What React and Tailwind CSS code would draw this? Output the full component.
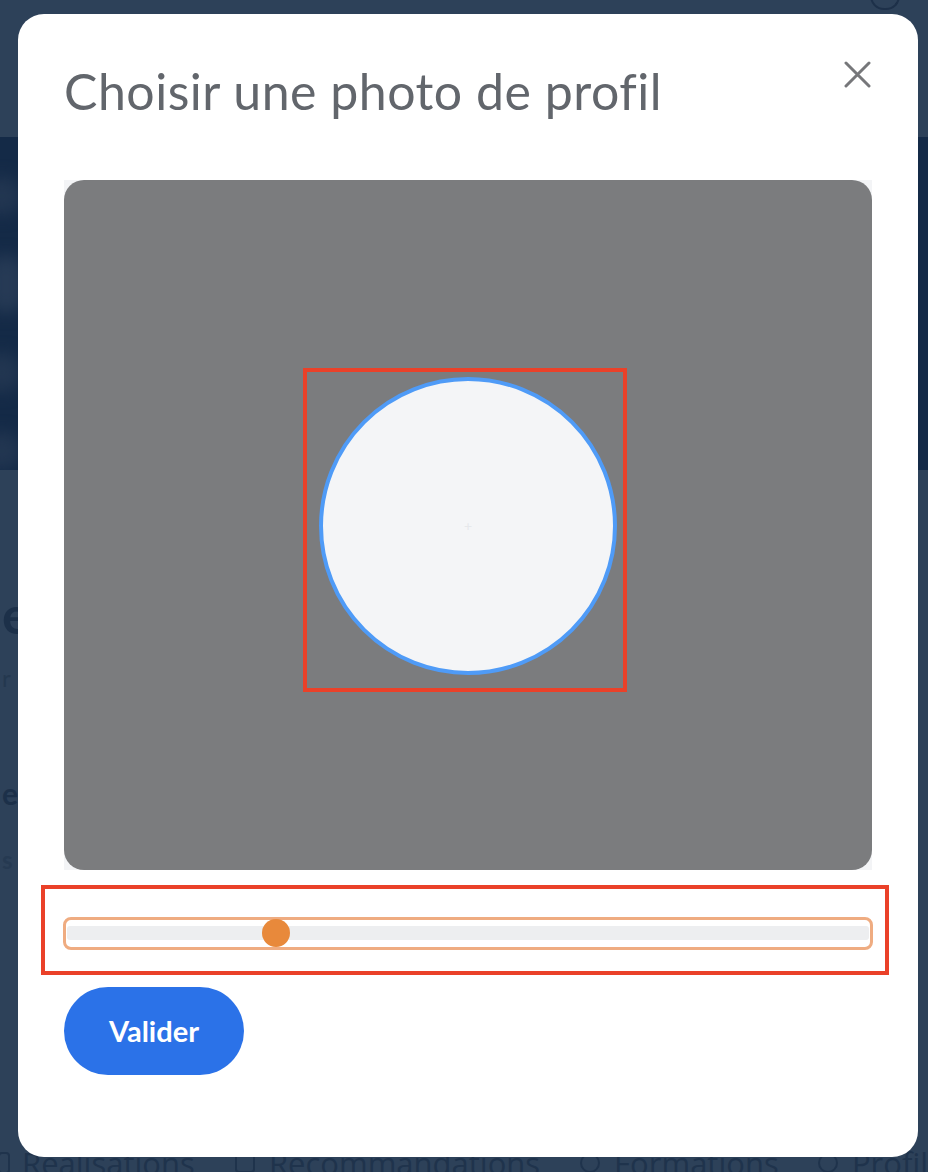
import React from 'react'

function CloseIcon() {
  return (
    <svg width="27" height="27" viewBox="0 0 27 27" fill="none">
      <path d="M2 2L25 25M25 2L2 25" stroke="#76777a" strokeWidth="3" strokeLinecap="round" />
    </svg>
  )
}

function BackgroundPage() {
  return (
    <div className="w-full h-[1172px] bg-[#2d4159] flex flex-col overflow-hidden" style={{ fontFamily: 'Lato, "Noto Sans", sans-serif' }}>
      {/* header */}
      <div className="h-[137px] bg-[#2d4159] flex justify-end pr-[28px]">
        <div className="w-[30px] h-[14px] -mt-[4px] rounded-b-full border-2 border-[#1d3049]" />
      </div>
      {/* hero */}
      <div className="h-[333px] bg-[#142a47] flex flex-col gap-[40px] pt-[40px] overflow-hidden">
        <div className="w-[40px] h-[40px] -ml-[18px] rounded-full bg-[#223651] blur-sm" />
        <div className="w-[40px] h-[60px] -ml-[14px] rounded-full bg-[#263a55] blur-sm" />
        <div className="w-[40px] h-[40px] -ml-[18px] rounded-full bg-[#223651] blur-sm" />
        <div className="w-[40px] h-[40px] -ml-[18px] rounded-full bg-[#223651] blur-sm" />
      </div>
      {/* content */}
      <div className="flex-1 flex flex-col text-[#1c3049]">
        <p className="mt-[118px] pl-[2px] text-[52px] font-bold leading-none">e</p>
        <p className="mt-[26px] pl-[2px] text-[24px] leading-none text-[#24384f]">r</p>
        <p className="mt-[88px] pl-[2px] text-[30px] font-bold leading-none">e</p>
        <p className="mt-[40px] pl-[2px] text-[24px] font-bold leading-none text-[#263a52]">s</p>
        <div className="mt-auto flex items-center -mb-[14px] text-[31px] text-[#1f334c] whitespace-nowrap" style={{ fontFamily: '"Open Sans", sans-serif' }}>
          <span className="w-[243px] flex items-center gap-[12px]"><span className="w-[12px] h-[22px] -ml-[2px] border-2 border-[#1f334c] rounded-sm" />Réalisations</span>
          <span className="w-[357px] flex items-center gap-[14px]"><span className="w-[20px] h-[20px] border-2 border-[#1f334c] rounded-sm" />Recommandations</span>
          <span className="w-[246px] flex items-center gap-[14px]"><span className="w-[20px] h-[20px] border-2 border-[#1f334c] rounded-full" />Formations</span>
          <span className="flex items-center gap-[14px]"><span className="w-[20px] h-[20px] border-2 border-[#1f334c] rounded-full" />Profil</span>
        </div>
      </div>
    </div>
  )
}

export default function App() {
  return (
    <div className="relative w-[928px] h-[1172px] overflow-hidden">
      <BackgroundPage />

      {/* Modal */}
      <div
        className="absolute left-[18px] top-[14px] w-[900px] h-[1143px] bg-white rounded-[26px] flex flex-col px-[46px] pt-[47px]"
        style={{ fontFamily: 'Lato, "Noto Sans", sans-serif' }}
      >
        <div className="flex items-start justify-between">
          <h1 className="text-[50px] leading-[60px] font-normal text-[#62666c] tracking-[0.5px]">Choisir une photo de profil</h1>
          <button className="mt-[0px] mr-[1px]">
            <CloseIcon />
          </button>
        </div>

        {/* Crop area */}
        <div className="mt-[59px] w-[808px] h-[690px] bg-[#f3f4f6]">
          <div className="w-full h-full bg-[#7b7c7e] rounded-[20px] flex items-center justify-center">
            <div className="ml-[-6px] mt-[10px] w-[324px] h-[324px] border-4 border-[#ea4129] flex items-start pl-[12px] pt-[5px]">
              <div className="w-[298px] h-[298px] rounded-full border-4 border-[#4f9bf7] bg-[#f4f5f7] flex items-center justify-center">
                <span className="text-[#e6e8eb] text-[14px] leading-none">+</span>
              </div>
            </div>
          </div>
        </div>

        {/* Zoom slider */}
        <div className="mt-[15px] -ml-[23px] -mr-[17px] h-[90px] border-4 border-[#ea4129] flex items-center pl-[18px] pr-[12px] pt-[6px]">
          <div className="relative w-full h-[33px] border-[3px] border-[#efac81] rounded-[8px] px-[1px] flex items-center">
            <div className="w-full h-[14px] bg-[#edeef0] rounded-[3px]" />
            <div className="absolute left-[196px] top-[-1px] w-[28px] h-[28px] rounded-full bg-[#e8893b]" />
          </div>
        </div>

        {/* Submit */}
        <button className="mt-[12px] w-[180px] h-[88px] rounded-full bg-[#2b72e8] text-white text-[29px] font-bold">
          Valider
        </button>
      </div>
    </div>
  )
}
